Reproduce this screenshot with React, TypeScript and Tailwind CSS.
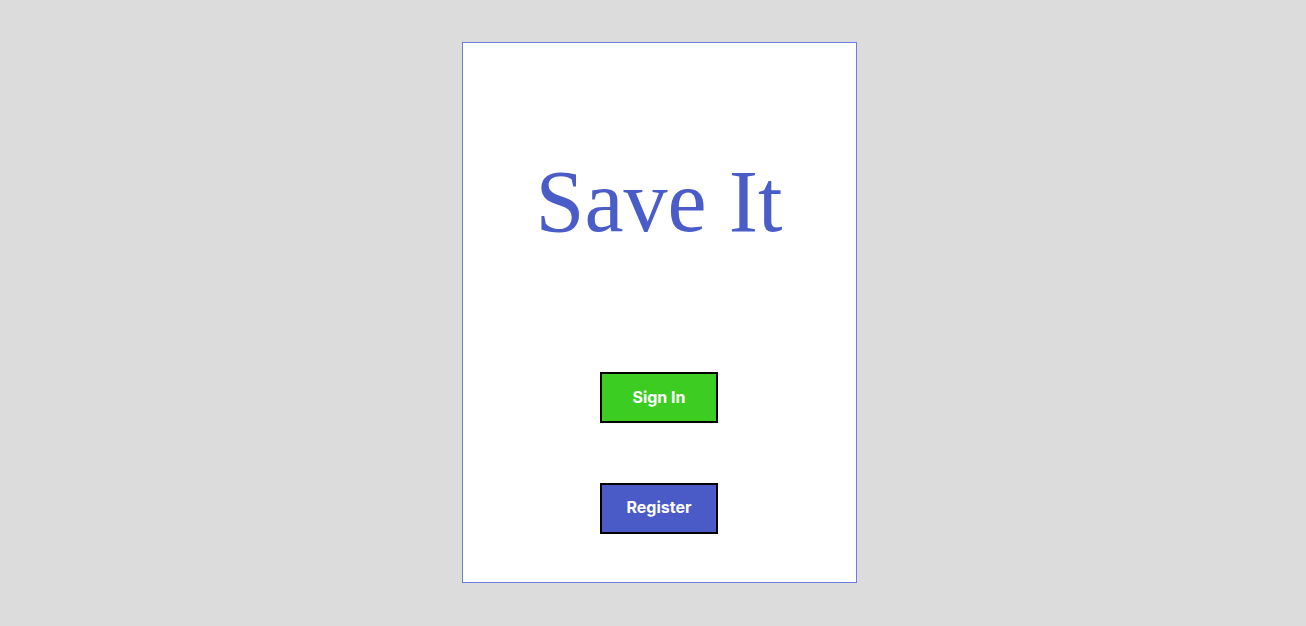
export default function App() {
  return (
    <div className="min-h-screen w-full bg-[#dcdcdc] pt-[42px] flex justify-center pl-[12px]">
      <div className="w-[395px] h-[541px] bg-white border border-[#6b7ee0] flex flex-col items-center">
        <h1 className="mt-[115px] text-[88px] leading-[88px] text-[#4a5cc8] font-['Liberation_Serif',serif]">
          Save It
        </h1>
        <button className="mt-[126px] w-[118px] h-[51px] pb-[2px] bg-[#3ccc22] border-2 border-black text-white font-bold text-[16px] font-['Inter',sans-serif]">
          Sign In
        </button>
        <button className="mt-[60px] w-[118px] h-[51px] pb-[3px] bg-[#4a5bc8] border-2 border-black text-white font-bold text-[16px] font-['Inter',sans-serif]">
          Register
        </button>
      </div>
    </div>
  )
}
